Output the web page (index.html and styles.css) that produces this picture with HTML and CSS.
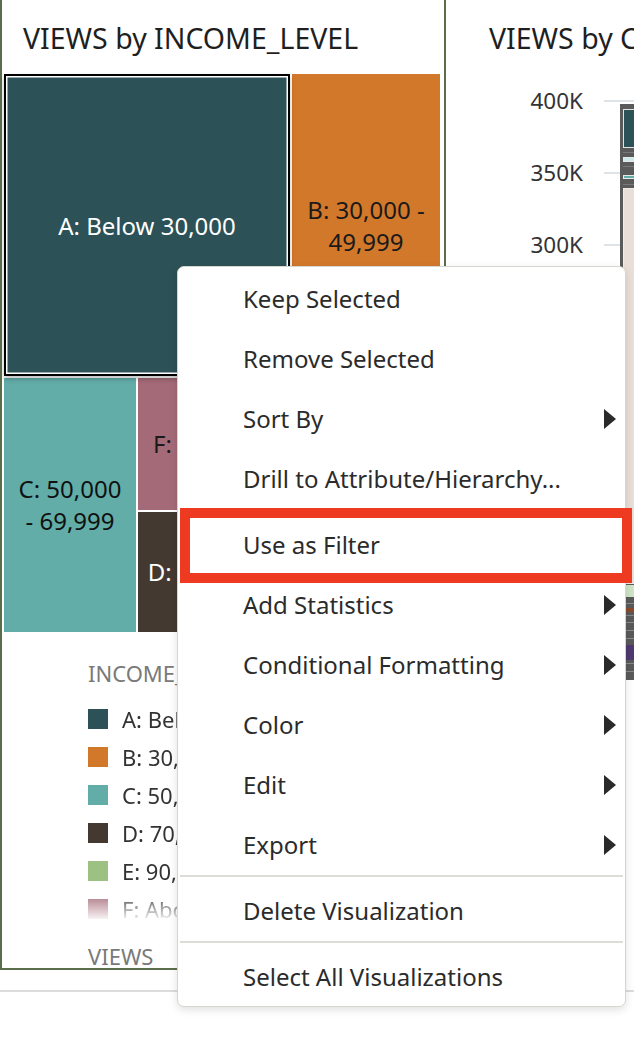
FILE: index.html
```html
<!DOCTYPE html>
<html lang="en">
<head>
<meta charset="utf-8">
<title>VIEWS by INCOME_LEVEL</title>
<link rel="stylesheet" href="styles.css">
</head>
<body>
<div class="dashboard">
  <section class="viz viz-left">
    <h2 class="viz-title">VIEWS by INCOME_LEVEL</h2>
    <div class="treemap">
      <div class="tm-row tm-top">
        <div class="tile tile-a selected"><span>A: Below 30,000</span></div>
        <div class="tile tile-b"><span>B: 30,000 -<br>49,999</span></div>
      </div>
      <div class="tm-row tm-bottom">
        <div class="tile tile-c"><span>C: 50,000<br>- 69,999</span></div>
        <div class="tm-col">
          <div class="tile tile-f"><span>F: Above 110,000</span></div>
          <div class="tile tile-d"><span>D: 70,000 - 89,999</span></div>
        </div>
        <div class="tile tile-e"><span>E</span></div>
      </div>
    </div>
    <div class="legend">
      <div class="legend-title">INCOME_LEVEL</div>
      <ul class="legend-list">
        <li><i class="sw sw-a"></i>A: Below 30,000</li>
        <li><i class="sw sw-b"></i>B: 30,000 - 49,999</li>
        <li><i class="sw sw-c"></i>C: 50,000 - 69,999</li>
        <li><i class="sw sw-d"></i>D: 70,000 - 89,999</li>
        <li><i class="sw sw-e"></i>E: 90,000 - 109,999</li>
        <li><i class="sw sw-f"></i>F: Above 110,000</li>
      </ul>
      <div class="legend-title legend-views">VIEWS</div>
    </div>
  </section>
  <section class="viz viz-right">
    <h2 class="viz-title">VIEWS by CUST_SEGMENT</h2>
    <svg class="bar-chart" width="188" height="620" viewBox="0 0 188 620">
      <g class="axis-labels">
        <text x="137" y="35" text-anchor="end">400K</text>
        <text x="137" y="107" text-anchor="end">350K</text>
        <text x="137" y="179" text-anchor="end">300K</text>
      </g>
      <g fill="#dde3e6">
        <rect x="158" y="26" width="30" height="2"/>
        <rect x="158" y="98" width="30" height="2"/>
        <rect x="158" y="170" width="30" height="2"/>
      </g>
      <rect x="174" y="30" width="20" height="576" fill="#5a5a5a"/>
      <rect x="177.5" y="35.5" width="14" height="38" fill="#2c5157" stroke="#e2e2e2"/>
      <rect x="177" y="78" width="14" height="1" fill="#7a7a7a"/>
      <rect x="177.5" y="83.5" width="14" height="4" fill="#cfeaea" stroke="#e8e8e8"/>
      <rect x="177" y="92" width="14" height="1" fill="#7a7a7a"/>
      <rect x="177.5" y="101.5" width="14" height="3" fill="#62ada8" stroke="#e8e8e8"/>
      <rect x="177" y="110" width="14" height="1" fill="#7a7a7a"/>
      <rect x="177.5" y="114.5" width="14" height="395" fill="#e9dfd8" stroke="#f2ece8"/>
      <rect x="177" y="511" width="14" height="12" fill="#cfe5c6"/>
      <g fill="#8a8a8a">
        <rect x="177" y="529" width="14" height="1"/>
        <rect x="177" y="541" width="14" height="1"/>
        <rect x="177" y="548" width="14" height="1"/>
        <rect x="177" y="556" width="14" height="1"/>
        <rect x="177" y="564" width="14" height="1"/>
        <rect x="177" y="589" width="14" height="1"/>
        <rect x="177" y="597" width="14" height="1"/>
      </g>
      <rect x="177" y="534" width="14" height="4" fill="#8b4a2b"/>
      <rect x="177" y="571" width="14" height="15" fill="#4f3a70"/>
    </svg>
  </section>
</div>

<div class="context-menu" role="menu">
  <div class="menu-item">Keep Selected</div>
  <div class="menu-item">Remove Selected</div>
  <div class="menu-item has-sub">Sort By</div>
  <div class="menu-item">Drill to Attribute/Hierarchy...</div>
  <div class="menu-sep"></div>
  <div class="menu-item">Use as Filter</div>
  <div class="menu-item has-sub">Add Statistics</div>
  <div class="menu-item has-sub">Conditional Formatting</div>
  <div class="menu-item has-sub">Color</div>
  <div class="menu-item has-sub">Edit</div>
  <div class="menu-item has-sub">Export</div>
  <div class="menu-sep"></div>
  <div class="menu-item">Delete Visualization</div>
  <div class="menu-sep"></div>
  <div class="menu-item">Select All Visualizations</div>
</div>
<div class="highlight-box"></div>
</body>
</html>
```
FILE: styles.css
```css
* { box-sizing: border-box; }

html, body {
  margin: 0;
  padding: 0;
}

body {
  width: 634px;
  height: 1054px;
  overflow: hidden;
  position: relative;
  background: #ffffff;
  font-family: "Noto Sans", "Open Sans", sans-serif;
  color: #2e2e2e;
}

.dashboard {
  display: flex;
  height: 992px;
  border-bottom: 2px solid #dcdcdc;
  align-items: flex-start;
}

.viz-title {
  margin: 0;
  padding-top: 20px;
  font-size: 28.5px;
  line-height: 36px;
  font-weight: 400;
  color: #1f1f1f;
  white-space: nowrap;
}

.viz-left {
  width: 446px;
  height: 970px;
  border: 2px solid #5b6e4a;
  border-top: none;
  flex: none;
}

.viz-left .viz-title {
  padding-left: 21px;
  margin-bottom: 18px;
}

.viz-right {
  flex: 1;
  min-width: 0;
  overflow: hidden;
}

.viz-right .viz-title {
  padding-left: 43px;
  margin-bottom: 18px;
}

.bar-chart {
  display: block;
}

.axis-labels text {
  font-family: "Noto Sans", "Open Sans", sans-serif;
  font-size: 22.5px;
  fill: #333333;
}

/* treemap */
.treemap {
  margin-left: 2px;
  width: 436px;
  height: 558px;
  display: flex;
  flex-direction: column;
  gap: 2px;
}

.tm-row {
  display: flex;
  gap: 2px;
}

.tm-top { height: 302px; }
.tm-bottom { height: 254px; }

.tm-col {
  width: 220px;
  display: flex;
  flex-direction: column;
  gap: 2px;
}

.tile {
  display: flex;
  align-items: center;
  justify-content: center;
  text-align: center;
  font-size: 24px;
  line-height: 32px;
  overflow: hidden;
  white-space: nowrap;
}

.tile-a {
  width: 286px;
  background: #2c5157;
  color: #ffffff;
  border: 2px solid #000000;
  box-shadow: inset 0 0 0 1.5px #ffffff, 0 3px 5px rgba(0,0,0,0.25);
  position: relative;
  z-index: 1;
}

.tile-a span { margin-top: 2px; }

.tile-b {
  flex: 1;
  background: #d2782b;
  color: #1a1a1a;
}

.tile-b span { margin-top: 2px; }

.tile-c {
  width: 132px;
  background: #62ada8;
  color: #111111;
}

.tile-f {
  height: 132px;
  background: #a56a78;
  color: #1a1a1a;
}

.tile-d {
  flex: 1;
  background: #443931;
  color: #ffffff;
}

.tile-e {
  flex: 1;
  background: #9dc183;
  color: #1a1a1a;
}

/* legend */
.legend {
  padding-left: 86px;
  margin-top: 26px;
}

.legend-title {
  font-size: 22px;
  line-height: 30px;
  color: #7a7a7a;
  white-space: nowrap;
}

.legend-list {
  list-style: none;
  margin: 12px 0 0;
  padding: 0;
  height: 224px;
  -webkit-mask-image: linear-gradient(to bottom, #000 192px, rgba(0,0,0,0.12) 218px, transparent 224px);
  mask-image: linear-gradient(to bottom, #000 192px, rgba(0,0,0,0.12) 218px, transparent 224px);
  overflow: hidden;
}

.legend-list li {
  display: flex;
  align-items: center;
  height: 38px;
  font-size: 22px;
  color: #333333;
  white-space: nowrap;
}

.sw {
  display: inline-block;
  width: 20px;
  height: 20px;
  margin-right: 14px;
  flex: none;
}

.sw-a { background: #2c5157; }
.sw-b { background: #d2782b; }
.sw-c { background: #62ada8; }
.sw-d { background: #443931; }
.sw-e { background: #9dc183; }
.sw-f { background: #a56a78; }

.legend-views {
  margin-top: 17px;
}

/* context menu */
.context-menu {
  position: absolute;
  left: 177px;
  top: 266px;
  width: 449px;
  padding: 1px 0 0;
  background: #ffffff;
  border: 1.5px solid #d6d6d0;
  border-radius: 7px;
  box-shadow: 0 3px 8px rgba(0,0,0,0.12);
  z-index: 10;
}

.menu-item {
  position: relative;
  height: 60px;
  display: flex;
  align-items: center;
  padding-left: 65px;
  font-size: 24px;
  color: #2b2b2b;
  white-space: nowrap;
}

.menu-item.has-sub::after {
  content: "";
  position: absolute;
  right: 9px;
  top: 50%;
  margin-top: -9px;
  border-left: 12px solid #2a2a2a;
  border-top: 10px solid transparent;
  border-bottom: 10px solid transparent;
}

.menu-sep {
  height: 6px;
  margin: 0 2px;
  border-top: 2px solid #dcdcd8;
  margin-top: 1px;
  margin-bottom: -1px;
}

.highlight-box {
  position: absolute;
  left: 180px;
  top: 508px;
  width: 452px;
  height: 75px;
  border: 10px solid #ee3a20;
  z-index: 11;
}
```
